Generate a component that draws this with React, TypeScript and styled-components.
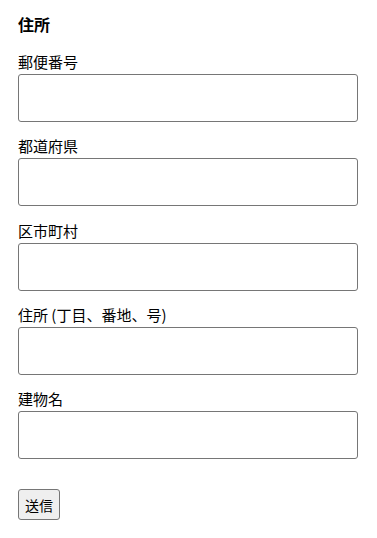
import styled, { createGlobalStyle } from "styled-components";

const GlobalStyle = createGlobalStyle`
  body {
    margin: 0;
    background: #fff;
    font-family: "Noto Sans CJK JP", "Noto Sans", sans-serif;
    color: #000;
  }
`;

const campos = ["郵便番号", "都道府県", "区市町村", "住所 (丁目、番地、号)", "建物名"];

export default function App() {
  return (
    <>
      <GlobalStyle />
      <FormSld onSubmit={(e) => e.preventDefault()}>
        <TitleSld>住所</TitleSld>
        {campos.map((nome) => (
          <GrupoSld key={nome}>
            <LabelSld>{nome}</LabelSld>
            <InputSld />
          </GrupoSld>
        ))}
        <BotaoSld type="submit">送信</BotaoSld>
      </FormSld>
    </>
  );
}

const FormSld = styled.form`
  display: flex;
  flex-direction: column;
  align-items: flex-start;
  padding: 13px 19px 0 18px;
`;

const TitleSld = styled.h3`
  margin: 0 0 17px;
  font-size: 16px;
  font-weight: bold;
  line-height: 22px;
`;

const GrupoSld = styled.div`
  display: flex;
  flex-direction: column;
  width: 100%;
  margin-bottom: 14.3px;
`;

const LabelSld = styled.label`
  font-size: 15px;
  line-height: 20px;
  margin-bottom: 2px;
`;

const InputSld = styled.input.attrs({ type: "text" })`
  box-sizing: border-box;
  width: 100%;
  height: 48px;
  border: 1px solid #767676;
  border-radius: 3px;
  padding: 4px 8px;
  font-size: 15px;
  font-family: inherit;
`;

const BotaoSld = styled.button`
  margin-top: 16px;
  height: 31px;
  padding: 0 6px;
  font-size: 14px;
  font-family: inherit;
  background: #efefef;
  border: 1px solid #767676;
  border-radius: 3px;
  color: #000;
`;
